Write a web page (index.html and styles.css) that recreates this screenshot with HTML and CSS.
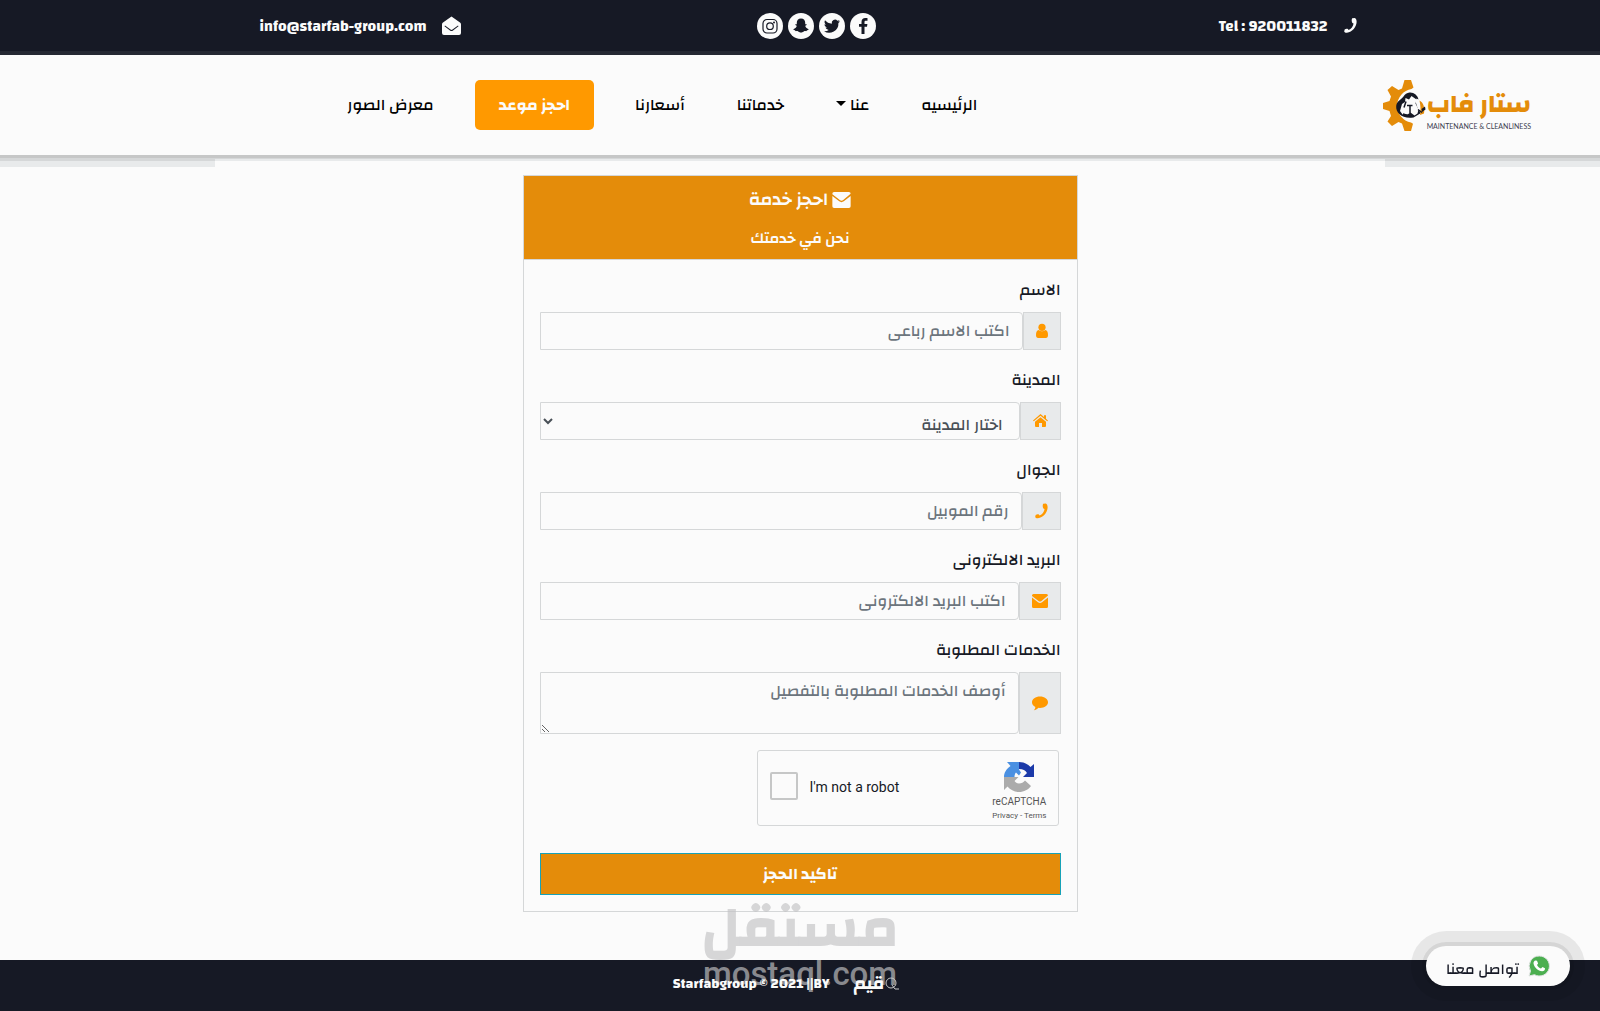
FILE: index.html
```html
<!DOCTYPE html>
<html lang="ar" dir="rtl">
<head>
    <meta charset="UTF-8">
    <meta name="viewport" content="width=device-width, initial-scale=1.0">
    <title>ستار فاب - احجز خدمة</title>
    <link rel="stylesheet" href="styles.css">
</head>
<body>
    <div class="topbar">
        <div class="topbar-inner">
            <a class="contact" href="tel:920011832">
                <svg width="13" height="17" viewBox="0 0 14 16"><path d="M8.8 0.300 L11.600 0 C12.800 0.200 13.600 2 13.600 4 C13.500 9.500 9 15.200 3.200 15.800 C1.800 16 0.600 15.400 0.200 14.400 L0.700 12.200 C1.800 11.300 3.200 11.200 4.200 11.700 L4.900 12.800 C7.800 11.500 9.900 9 10.300 5.800 L9 5.200 C8.100 3.600 8.100 1.800 8.800 0.300Z"/></svg>
                <span dir="ltr">Tel : 920011832</span>
            </a>
            <div class="social">
                <a href="#" aria-label="Facebook"><svg viewBox="0 0 26 26"><path d="M14.5 21v-7.2h2.5l.4-2.900h-2.900V9.200c0-.9.3-1.400 1.500-1.400h1.500V5.200c-.3 0-1.200-.1-2.200-.1-2.300 0-3.800 1.400-3.800 3.800v2H9v2.900h2.500V21z"/></svg></a>
                <a href="#" aria-label="Twitter"><svg viewBox="0 0 26 26"><path d="M21 8.200c-.6.3-1.200.4-1.900.5.7-.4 1.200-1.100 1.400-1.800-.6.4-1.300.6-2.100.8A3.300 3.300 0 0 0 12.800 10.700C10.100 10.600 7.700 9.300 6 7.300c-.9 1.500-.4 3.400 1 4.400-.5 0-1-.2-1.500-.4 0 1.600 1.100 2.900 2.600 3.200-.5.1-1 .2-1.500.1.4 1.300 1.600 2.200 3.100 2.300A6.600 6.600 0 0 1 5 18.200a9.300 9.300 0 0 0 14.400-8.300c.6-.5 1.200-1 1.600-1.700z"/></svg></a>
                <a href="#" aria-label="Snapchat"><svg viewBox="0 0 26 26"><path d="M13 5.500c-2.800 0-4.300 2-4.200 4.300v1.400c-.5.3-1.200-.2-1.500.3-.2.600 1.200.9 1.400 1.500.1 1-1.700 2.700-3 3-.6.2-.3.9.3 1.100.9.3 1.100.2 1.400 1 .8.2 1.600-.2 2.500.2.9.5 1.700 1.300 3.100 1.300s2.200-.8 3.100-1.300c.9-.4 1.700 0 2.500-.2.300-.8.5-.7 1.400-1 .6-.2.900-.9.3-1.100-1.300-.3-3.100-2-3-3 .2-.6 1.600-.9 1.400-1.500-.3-.5-1 0-1.500-.3V9.800c.1-2.300-1.400-4.300-4.200-4.300z"/></svg></a>
                <a href="#" aria-label="Instagram"><svg class="outline" viewBox="0 0 26 26"><rect x="6" y="6.500" width="14" height="13.500" rx="4"/><circle cx="13" cy="13.200" r="3.300"/><circle cx="17" cy="9.400" r=".4"/></svg></a>
            </div>
            <a class="contact contact-mail" href="mailto:info@starfab-group.com">
                <svg width="19" height="20" viewBox="0 0 19 20"><path fill-rule="evenodd" d="M9.500 0.500L18 6.500Q19 7.200 19 8.500V17q0 2-2 2H2q-2 0-2-2V8.500Q0 7.200 1 6.500zM2.500 10.200L8 14.500q1.500 1 3 0L16.500 10.200 16 9.500 10.500 13.600q-1 .7-2 0L3 9.500z"/></svg>
                <span dir="ltr">info@starfab-group.com</span>
            </a>
        </div>
    </div>

    <header class="navbar">
        <a class="logo" href="#">
            <span class="logo-text">
                <span class="logo-name">ستار فاب</span>
                <span class="logo-tag" dir="ltr">MAINTENANCE &amp; CLEANLINESS</span>
            </span>
            <svg class="logo-gear" width="44" height="51" viewBox="0 0 44 51">
                <path fill="#e48c0a" d="M19 8.500L21.500 0h6.500l2.500 7.500-2 1.500A17 17 0 0 0 28 42.500l2 1.300L28 51h-6.500L19 43.500l-3.500-1.500L9 46 4.500 41.500 8 36l-1.500-5L0 29v-6l6.500-2L8 16.500 4.500 10 9 6l6.500 4z"/>
                <path fill="#161925" d="M26.500 12.500c4-.5 8.500 3 9 7l-2-1-1 3 2.500 8 3 3.500-7.500 4.500C20 39.500 12.500 33 13.200 26c.5-5 5.300-6.500 7.300-9.500 1.200-2 3.500-3.700 6-4z"/>
                <path fill="#fbfbfb" d="M28.500 16l5 3.500-1 4 3 6-1 4-3 2-4-3-3 2-5 0-2.500-3.500 2-7 3-2 .5-4 3.500 1.500z"/>
                <path fill="#e48c0a" d="M36.500 20.500c4 2 5.500 7 4.500 13l-4 1.500c1-5 .5-9.500-.5-14.500z"/>
                <path fill="none" stroke="#161925" stroke-width="1.500" d="M24 25.500h5.500M27 25.500v8m-6-6 2-6m12 8 4 3M20 34l8 2.500"/>
                <path fill="#161925" d="M38.500 29l3.500-2.500.5 3-3.500 2.500z"/>
            </svg>
        </a>
        <nav class="menu">
            <a href="#">الرئيسيه</a>
            <a class="dropdown" href="#">عنا</a>
            <a href="#">خدماتنا</a>
            <a href="#">أسعارنا</a>
            <a class="menu-btn" href="#">احجز موعد</a>
            <a href="#">معرض الصور</a>
        </nav>
    </header>

    <main>
        <section class="card">
            <div class="card-header">
                <h3>
                    <svg width="19" height="16" viewBox="0 0 16 14"><path d="M0 1.500Q0 0 1.500 0h13Q16 0 16 1.500L9.500 7Q8 8.200 6.500 7L0 2zM0 3.500 6 8.200Q8 9.600 10 8.200L16 3.500v9q0 1.500-1.500 1.500h-13Q0 14 0 12.500z"/></svg>
                    احجز خدمة
                </h3>
                <p>نحن في خدمتك</p>
            </div>
            <form class="card-body">
                <div class="field">
                    <label for="name">الاسم</label>
                    <div class="input-group">
                        <span class="addon"><svg width="12" height="16" viewBox="0 0 12 16"><circle cx="6" cy="4.300" r="3.600"/><path d="M2.600 7q3.400 2.600 6.800 0Q12 7.600 12 12q0 3-2.200 3H2.200Q0 15 0 12 0 7.600 2.600 7z"/></svg></span>
                        <input class="control" type="text" id="name" placeholder="اكتب الاسم رباعى">
                    </div>
                </div>
                <div class="field">
                    <label for="city">المدينة</label>
                    <div class="input-group">
                        <span class="addon"><svg width="15" height="14" viewBox="0 0 15 14"><path d="M7.500 3.200 13 7.800V12q0 1-1 1H9V9H6v4H3q-1 0-1-1V7.800zM7.500 0 11 2.900V1.200h2v3.500l2 1.700-.8.900L7.500 1.800.8 7.300 0 6.400z"/></svg></span>
                        <select class="control" id="city">
                            <option>اختار المدينة</option>
                        </select>
                    </div>
                </div>
                <div class="field">
                    <label for="phone">الجوال</label>
                    <div class="input-group">
                        <span class="addon"><svg width="13" height="16" viewBox="0 0 14 16"><path d="M8.800 0.300 L11.600 0 C12.800 0.200 13.600 2 13.600 4 C13.500 9.500 9 15.200 3.200 15.800 C1.800 16 0.600 15.400 0.200 14.400 L0.700 12.200 C1.800 11.300 3.200 11.200 4.200 11.700 L4.900 12.800 C7.800 11.500 9.900 9 10.300 5.800 L9 5.200 C8.100 3.600 8.100 1.800 8.800 0.300Z"/></svg></span>
                        <input class="control" type="text" id="phone" placeholder="رقم الموبيل">
                    </div>
                </div>
                <div class="field">
                    <label for="email">البريد الالكترونى</label>
                    <div class="input-group">
                        <span class="addon"><svg width="16" height="14" viewBox="0 0 16 14"><path d="M0 1.500Q0 0 1.500 0h13Q16 0 16 1.500L9.500 7Q8 8.200 6.500 7L0 2zM0 3.500 6 8.200Q8 9.600 10 8.200L16 3.500v9q0 1.500-1.500 1.500h-13Q0 14 0 12.500z"/></svg></span>
                        <input class="control" type="email" id="email" placeholder="اكتب البريد الالكترونى">
                    </div>
                </div>
                <div class="field">
                    <label for="services">الخدمات المطلوبة</label>
                    <div class="input-group">
                        <span class="addon"><svg width="16" height="16" viewBox="0 0 16 16"><path d="M8 1.500c4.500 0 8 2.500 8 5.700s-3.500 5.700-8 5.700l-1.500-.1C5 14.200 3.500 15 1.800 15.200c1-.9 1.500-2 1.500-3.300C1.300 10.800 0 9.200 0 7.200 0 4 3.500 1.500 8 1.500z"/></svg></span>
                        <textarea class="control" id="services" rows="2" placeholder="أوصف الخدمات المطلوبة بالتفصيل"></textarea>
                    </div>
                </div>

                <div class="captcha" dir="ltr">
                    <input type="checkbox" id="robot">
                    <label for="robot">I'm not a robot</label>
                    <div class="captcha-brand">
                        <svg width="32" height="32" viewBox="0 0 32 32">
                            <path fill="#1c3aa9" d="M16 1c5 0 9 2 11.500 5L31 3v13H20l4-4c-1.500-2.500-4-4-8-4z"/>
                            <path fill="#4a90e2" d="M16 1H4l3.500 4C3 8 1 12 1 16h10.500c0-2 .5-3.500 1.500-4.500l3 3 2-3-2-3z"/>
                            <path fill="#ababab" d="M1 16v13l3.500-3.500C7.500 29 11.500 31 16 31c5 0 9.500-2.500 12-6l-6-5.500c-1.500 2-3.500 3-6 3-2 0-3.500-1-4.500-2.500l4-4z"/>
                        </svg>
                        <span class="captcha-name">reCAPTCHA</span>
                        <span class="captcha-links"><a href="#">Privacy</a> - <a href="#">Terms</a></span>
                    </div>
                </div>

                <button class="submit" type="submit">تاكيد الحجز</button>
            </form>
        </section>
    </main>

    <footer class="footer">
        <div class="watermark">
            <span class="watermark-ar">مستقل</span>
            <span class="watermark-en" dir="ltr">mostaql.com</span>
        </div>
        <a class="agency" href="#">
            <svg width="15" height="14" viewBox="0 0 15 14"><circle cx="7" cy="6" r="5"/><path d="M8 8l3 4h4"/></svg>
            <span>قيم</span>
        </a>
        <span class="copyright" dir="ltr">Starfabgroup © 2021 ||BY</span>
    </footer>

    <a class="whatsapp" href="#">
        <svg width="22" height="22" viewBox="0 0 22 22">
            <path fill="#4caf50" stroke="#e2e4e5" d="M11.300 1a10 10 0 1 1-4.800 18.700L1 21l1.500-5A10 10 0 0 1 11.300 1z"/>
            <path fill="#fff" d="M7.500 5.500l1.500.2 1.100 2.700-1.100 1.500c1 1.900 2.200 2.900 4 3.600l1.500-1.500 2.500 1.300c.2 1.800-1.200 3-2.900 3-3.900-.2-8.100-4.200-8.600-8.100 0-1.200.8-2.500 2-2.700z"/>
        </svg>
        <span>تواصل معنا</span>
    </a>
</body>
</html>
```
FILE: styles.css
```css
* {
    margin: 0;
    padding: 0;
    box-sizing: border-box;
}

body {
    min-height: 100vh;
    display: flex;
    flex-direction: column;
    background: #fbfbfb;
    color: #161925;
    font-family: 'Changa', Roboto, 'DejaVu Sans', sans-serif;
    font-size: 16px;
    font-weight: 500;
    line-height: 24px;
}

a {
    color: inherit;
    text-decoration: none;
}

/* top bar */
.topbar {
    background: #161925;
    border-bottom: 4px solid #252833;
    color: #fbfbfb;
    font-size: 15px;
    font-weight: 700;
}

.topbar-inner {
    display: grid;
    grid-template-columns: 1fr 1fr 1fr;
    align-items: center;
    max-width: 1113px;
    height: 51px;
    margin: 0 auto;
    padding-left: 16px;
}

.contact {
    display: flex;
    align-items: center;
    gap: 16px;
}

.contact-mail {
    justify-content: flex-end;
}

.contact svg {
    fill: #fbfbfb;
}

.contact span {
    padding-top: 2px;
}

.social {
    display: flex;
    justify-content: center;
    gap: 5px;
    padding-left: 16px;
}

.social a {
    width: 26px;
    height: 26px;
    border-radius: 50%;
    background: #fbfbfb;
}

.social svg {
    display: block;
    fill: #161925;
}

.social .outline {
    fill: none;
    stroke: #161925;
    stroke-width: 1.2;
}

/* navbar */
.navbar {
    position: relative;
    display: flex;
    align-items: center;
    height: 100px;
    padding-right: 69px;
    background: #fbfbfb;
    box-shadow: 0 3px 0 #c6c7c7, 0 4px 0 #d5d7d8, 0 6px 0 #e8eaeb;
}

.navbar::before,
.navbar::after {
    content: '';
    position: absolute;
    top: 103px;
    width: 215px;
    height: 6px;
    background: #e8eaeb;
    border-top: 3px solid #d5d7d8;
}

.navbar::before {
    right: 0;
}

.navbar::after {
    left: 0;
}

.logo {
    display: flex;
    height: 51px;
}

.logo-gear {
    flex: none;
}

.logo-text {
    display: flex;
    flex-direction: column;
    white-space: nowrap;
}

.logo-name {
    height: 42px;
    color: #e48c0a;
    font-size: 25px;
    font-weight: 800;
    line-height: 48px;
}

.logo-tag {
    color: #3c4150;
    font-family: Lato, sans-serif;
    font-size: 7px;
    font-weight: 400;
    line-height: 8px;
    text-align: right;
}

.menu {
    flex: 1;
    display: flex;
    justify-content: center;
    align-items: center;
    gap: 52px;
    padding-right: 58px;
    color: #000;
}

.dropdown::after {
    content: '';
    display: inline-block;
    margin-right: 4px;
    border: 5px solid transparent;
    border-top-color: #000;
    border-bottom: 0;
    vertical-align: 4px;
}

.menu-btn {
    margin: 0 -11px;
    padding: 13px 24px;
    border-radius: 5px;
    background: #ff9900;
    color: #fbfbfb;
    font-weight: 700;
}

/* booking form */
main {
    flex: 1;
    padding: 20px 15px;
}

.card {
    max-width: 555px;
    margin: 0 auto;
    border: 1px solid #d5d7d8;
}

.card-header {
    padding: 8px 0;
    background: #e48c0a;
    border-bottom: 1px solid #d5d7d8;
    color: #fbfbfb;
    text-align: center;
}

.card-header h3 {
    font-size: 18px;
    font-weight: 600;
    line-height: 32px;
}

.card-header svg {
    fill: #fbfbfb;
    vertical-align: -3px;
}

.card-header p {
    padding: 11px 0 0;
    font-size: 15px;
    font-weight: 600;
}

.card-body {
    padding: 16px;
}

.field {
    margin-bottom: 16px;
}

.field label {
    display: block;
    margin-bottom: 8px;
    line-height: 28px;
}

.input-group {
    display: flex;
}

.addon {
    display: flex;
    align-items: center;
    padding: 0 12px;
    background: #e8eaeb;
    border: 1px solid #d5d7d8;
}

.addon svg {
    fill: #ff9900;
}

.control {
    flex: 1;
    min-width: 0;
    height: 38px;
    padding: 6px 12px;
    background: #fbfbfb;
    border: 1px solid #d5d7d8;
    border-radius: 0 4px 4px 0;
    color: #495057;
    font-family: inherit;
    font-size: 16px;
    font-weight: 500;
    line-height: 24px;
}

.control::placeholder {
    color: #6c757d;
}

textarea.control {
    display: block;
    height: 62px;
    resize: vertical;
}

.captcha {
    display: flex;
    align-items: center;
    width: 302px;
    height: 76px;
    margin: 0 2px 27px 0;
    padding: 0 11px 4px 12px;
    border: 1px solid #d5d7d8;
    border-radius: 3px;
    font-family: Roboto, sans-serif;
    font-weight: 400;
}

.captcha input {
    appearance: none;
    width: 28px;
    height: 28px;
    border: 2px solid #c6c7c7;
    border-radius: 2px;
}

.captcha label {
    flex: 1;
    padding: 2px 0 0 12px;
    font-size: 14px;
}

.captcha-brand {
    display: flex;
    flex-direction: column;
    align-items: center;
    padding-top: 10px;
    color: #555;
}

.captcha-name {
    font-size: 10px;
    line-height: 18px;
}

.captcha-links {
    font-size: 8px;
    line-height: 10px;
}

.submit {
    display: block;
    width: 100%;
    height: 42px;
    background: #e48c0a;
    border: 1px solid #17a2b8;
    color: #fbfbfb;
    font-family: inherit;
    font-size: 16px;
    font-weight: 700;
}

/* footer */
.footer {
    position: relative;
    display: flex;
    justify-content: center;
    align-items: center;
    gap: 24px;
    height: 51px;
    padding: 0 28px 4px 0;
    background: #161925;
    color: #fbfbfb;
    font-size: 14px;
    font-weight: 700;
}

.agency,
.copyright {
    position: relative;
}

.agency {
    display: flex;
    align-items: center;
    font-size: 18px;
}

.agency svg {
    fill: none;
    stroke: #c6c7c7;
}

.watermark {
    position: absolute;
    top: -60px;
    left: 50%;
    display: flex;
    flex-direction: column;
    align-items: center;
    transform: translateX(-50%);
    color: #c3c3c5;
    opacity: .66;
    pointer-events: none;
}

.watermark-ar {
    font-size: 58px;
    line-height: 58px;
}

.watermark-en {
    font-family: Roboto, sans-serif;
    font-size: 33px;
    font-weight: 500;
    line-height: 32px;
}

/* floating chat link */
.whatsapp {
    position: fixed;
    right: 30px;
    bottom: 25px;
    display: flex;
    justify-content: center;
    align-items: center;
    gap: 9px;
    width: 144px;
    height: 40px;
    border-radius: 20px;
    background: #fbfbfb;
    box-shadow: 0 0 0 4px rgba(0, 0, 0, .08), 0 0 0 15px rgba(0, 0, 0, .08);
    font-size: 15px;
}

.whatsapp span {
    padding-top: 8px;
}
```
